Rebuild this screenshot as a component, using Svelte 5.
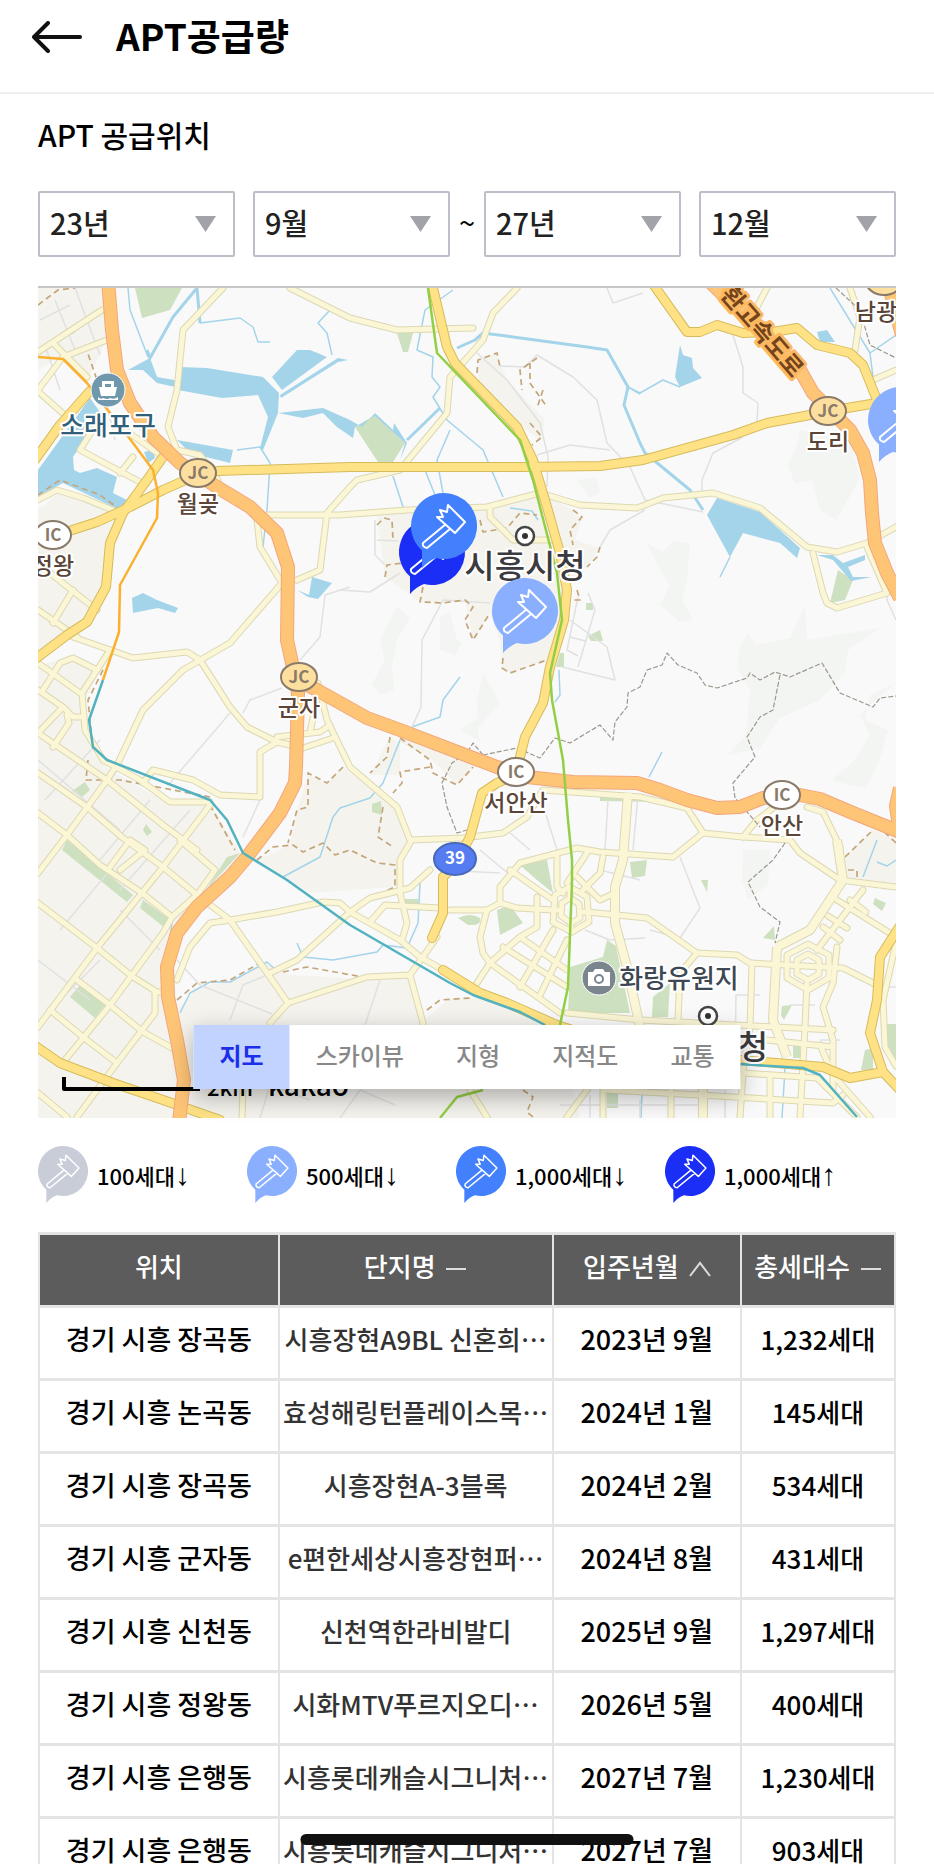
<script>
  let fromYear = $state('23년');
  let fromMonth = $state('9월');
  let toYear = $state('27년');
  let toMonth = $state('12월');
  let mapType = $state('지도');

  const years = ['23년', '24년', '25년', '26년', '27년'];
  const months = Array.from({ length: 12 }, (_, i) => `${i + 1}월`);
  const mapTypes = ['지도', '스카이뷰', '지형', '지적도', '교통'];

  const legend = [
    { level: 'lv1', label: '100세대', arrow: '↓' },
    { level: 'lv2', label: '500세대', arrow: '↓' },
    { level: 'lv3', label: '1,000세대', arrow: '↓' },
    { level: 'lv4', label: '1,000세대', arrow: '↑' },
  ];

  const rows = [
    ['경기 시흥 장곡동', '시흥장현A9BL 신혼희…', '2023년 9월', '1,232세대'],
    ['경기 시흥 논곡동', '효성해링턴플레이스목…', '2024년 1월', '145세대'],
    ['경기 시흥 장곡동', '시흥장현A-3블록', '2024년 2월', '534세대'],
    ['경기 시흥 군자동', 'e편한세상시흥장현퍼…', '2024년 8월', '431세대'],
    ['경기 시흥 신천동', '신천역한라비발디', '2025년 9월', '1,297세대'],
    ['경기 시흥 정왕동', '시화MTV푸르지오디…', '2026년 5월', '400세대'],
    ['경기 시흥 은행동', '시흥롯데캐슬시그니처…', '2027년 7월', '1,230세대'],
    ['경기 시흥 은행동', '시흥롯데캐슬시그니처…', '2027년 7월', '903세대'],
  ];

  // map layers, bottom to top
  const urban = [
    'M38 288H103L106 340 88 380 60 357 38 370Z',
    'M38 510L60 492 120 515 108 560 105 590 87 622 38 655Z',
    'M38 665L73 658 100 668 85 700 90 750 110 770 170 805 210 805 245 860 200 905 172 930 165 990 182 1118H38Z',
    'M180 1118L176 1010 200 986 230 982 265 963 290 975 367 979 410 977 424 1020 450 998 480 998 560 1030 580 1118Z',
    'M377 515L487 510 545 495 572 510 582 520 575 540 600 548 587 567 566 590 560 640 547 660 510 673 502 668 500 640 490 613 473 640 465 600 443 603 420 602 385 577Z',
    'M478 360L497 353 507 380 545 420 540 440 520 425 478 380Z',
    'M343 767L397 810 410 843 395 887 310 893 258 860 290 845 297 810 308 775 327 783Z',
    'M390 737L430 758 457 785 475 767 490 770 400 738 400 775 370 775Z',
    'M845 857L873 830 896 840V886L845 880Z',
  ];

  const forest = [
    'M800 430L850 440 860 478 850 496 836 520 820 510 812 480 795 484 788 465 797 445Z',
    'M740 645L748 634 756 645 790 638 805 606 807 640 880 628 848 650 845 672 820 700 780 718 760 748 728 755 746 735 750 690 737 668Z',
    'M896 683L870 695 865 720 888 730 880 758 866 788 850 785 832 780 855 760 870 735 860 715 875 700Z',
    'M397 607L410 618 397 640 392 665 394 690 380 695 372 684 385 660 380 640 390 620Z',
    'M440 617L450 612 457 640 462 642 455 655 440 650Z',
    'M483 673L500 703 478 728 480 742 460 730 478 718 477 700Z',
    'M647 543L663 552 673 541 690 543 687 580 682 600 693 620 680 622 660 605 670 585 660 570Z',
    'M743 850L770 850 768 885 748 900 742 880Z',
    'M577 480L596 477 600 492 590 498Z',
  ];

  const parks = [
    'M135 288H182L170 310 142 318Z',
    'M397 333H413L408 352H403Z',
    'M355 427L375 415 405 443 393 462H378Z',
    'M838 570L853 580 845 600 830 603Z',
    'M67 840L133 895 127 902 62 850Z',
    'M143 900L168 918 165 928 140 908Z',
    'M80 985L105 1005 95 1018 70 997Z',
    'M227 857L240 853 215 880 203 895Z',
    'M85 782L90 790 82 797 72 791Z',
    'M146 824L152 832 147 836 143 830Z',
    'M607 940L616 946 630 1013H568L570 967 603 957Z',
    'M653 997L670 983 668 1017H652Z',
    'M520 865L547 860 553 893 537 880Z',
    'M497 910L510 905 523 923 500 935Z',
    'M630 862L647 860 645 876 632 878Z',
    'M458 918Q470 912 480 918Q482 926 468 925Z',
    'M600 796L663 798V802L600 801Z',
    'M372 804L381 801 382 815 372 812Z',
    'M763 938L774 926 775 940Z',
    'M875 898L886 903 882 911 873 904Z',
    'M588 636L600 630 603 641 591 641Z',
    'M586 603H593V610H586Z',
    'M560 653H564V667H556Z',
    'M701 880H708L707 892Z',
    'M404 899H418V904H404Z',
    'M865 1050L873 1048 873 1070 861 1070Z',
    'M883 1024H896V1066L885 1047Z',
    'M782 1006L792 1005 784 1020 781 1015Z',
    'M607 1092H618V1108H607Z',
    'M793 1046H800V1058H793Z',
  ];

  const water = [
    'M90 398L100 412 97 420 73 457 74 470 80 473 97 468 117 477 113 493 127 500 120 510 63 483 38 497V470Z',
    'M128 370L150 358 157 377 180 381V388L157 383 143 370Z',
    'M180 367L207 368 263 377 279 393 278 413 263 450 260 448 268 417 258 395 222 398 178 390Z',
    'M272 377L297 350 310 350 327 357 282 390Z',
    'M280 395L338 358 348 360 338 362 281 398Z',
    'M177 440L233 450 230 463 190 453Z',
    'M278 413L323 408 350 420 362 427 375 413 393 430 394 423 407 443 400 460 405 443 375 416 355 427 353 438 337 427 323 413 303 418Z',
    'M132 598L143 593 157 600 178 608 175 613 158 608 133 613Z',
    'M312 577L332 583 318 599 308 597 297 590 309 595Z',
    'M680 345L683 355 692 358 693 368 702 378 680 387 675 377Z',
    'M717 498L760 512 800 548 797 558 780 543 743 533 730 557 707 515Z',
    'M817 332L827 330 835 342 820 342Z',
    'M817 555H833L843 563 865 555V560L848 567 853 577 872 577 851 581 833 560Z',
    'M144 452L153 450 155 458 148 463Z',
  ];

  const streams = [
    'M128 288L130 310 148 357M200 323L240 318 253 327 258 342H270',
    'M330 310L318 323 327 333 332 355',
    'M237 450L260 447 270 463 267 510 263 547',
    'M453 290L425 310 417 350 433 357 432 377 440 387 433 397 447 420 483 450 503 497',
    'M450 430L437 460 443 493M393 476L403 507M425 470L437 500',
    'M628 387L640 393 663 380 680 387M628 387L640 394',
    'M460 677L443 700 440 717 412 727M649 777L662 752M559 670L560 695 555 702',
    'M400 740L383 783 370 798 340 808 333 817 320 857 283 877',
    'M180 1013L190 993 210 982 230 982 267 962 276 970',
    'M297 943L303 957 333 960 377 952 383 945 407 948 418 923 420 883',
    'M830 288L870 353 873 377M870 353L896 335M720 577L730 557',
    'M877 840L863 877M877 862L887 866 896 860M510 508L532 511 538 520',
    'M172 920L167 980M642 1093L641 1118M785 1068L782 1118',
  ];
  const rivers = [
    'M197 288L173 317 150 358 147 350',
    'M457 348L475 340 483 333 513 337 587 347 607 350 628 387 624 405 640 443 645 453 690 490 703 510',
    'M407 440L440 408M197 288L200 323',
  ];

  const lanes = [
    'M537 355L573 377 597 400 607 443 630 467 645 500 703 512',
    'M477 353L507 380 540 423 548 457 547 487M500 366L525 367 537 355',
    'M537 455L570 445 610 450M607 288L613 303 643 293M733 335L743 367V393L758 403 757 423',
    'M743 437L713 453 702 480V493M645 510L610 530 600 547',
    'M443 600L422 640 421 707 412 727M340 590L370 592 400 573M443 600L490 603',
    'M578 597L567 650 578 656M588 593L595 610 578 667M570 620L607 647 615 680 562 667M570 637L585 641',
    'M350 587L325 595 320 637 300 660M282 688L250 700 243 713M230 713L170 783M260 800L243 837',
    'M40 320L70 305M55 300L75 350M75 288L100 355M45 345L60 390M105 395L115 440M60 410L85 430',
    'M38 760L120 830M45 800L100 740M100 860L150 800M120 890L190 810M60 930L110 870M38 960L90 1000M120 910L160 950M60 1000L100 960M140 850L200 895',
    'M177 960L200 985 272 1014M230 1020L243 985 267 975M365 1025L380 980M260 1118L270 1085 310 1100M340 1118L360 1090 395 1105',
    'M600 870L640 880M680 857L700 908 680 938 650 930M440 870L500 873M585 930L610 940 645 938M480 850L510 875',
    'M638 795L633 850M608 800L605 850M546 815L557 850M510 833L530 850M375 520V555L385 565M377 540L398 541',
    'M735 1060L736 995 760 995M880 987H896M790 1005L815 1005M820 1040H840',
    'M560 1105H700M590 1095V1118M640 1100V1118M725 1090V1118M750 1100H800M896 620L887 600 888 575',
  ];

  const minor = [
    'M223 288L183 330 177 390 168 427 177 450 200 455 218 480M290 288L350 318 397 330 473 328',
    'M38 352L102 310M107 340L63 357 38 390M53 343L87 377M40 393L67 417',
    'M140 482L80 450 97 423M133 457L120 473M38 500L57 490 83 498 120 513M125 430L163 457',
    'M267 515H340L407 510 487 507 540 493 580 505 637 508 663 498 713 493 760 508 807 547 837 552 867 543 896 527',
    'M297 580L320 570 327 513 350 487 357 480 400 470 447 413 450 377 483 340 493 313 517 288',
    'M257 520L260 547 282 583 230 643 183 670 143 710 118 763',
    'M73 637L133 658 187 652 200 660 230 707 247 727 277 742 303 748 333 738',
    'M277 742L260 752V797L220 795 193 780 153 770 143 783M277 737L320 732 330 725',
    'M318 683L327 720 350 767 397 807 410 840 463 838 503 833 527 817 543 790 640 797 687 808',
    'M110 650L82 693 85 730 103 760 140 780 170 802H210M317 700L310 732',
    'M50 573L97 610M38 610L77 637M73 590L53 623M38 663L80 693M38 690L63 707 73 717H82M43 690L60 663 73 658 97 670M63 707L38 733M67 715L69 723 53 747',
    'M38 733L107 780 163 825 197 850M38 773L87 807 123 838 163 867 197 895 230 920 263 967 288 1003',
    'M38 813L67 835 100 865 142 893 172 917M38 903L97 948 133 977 157 992M77 980L110 1005 143 1032 172 1048M50 1010L83 1037 117 1063M38 1093L67 1117',
    'M38 873L67 835 107 780 118 763M38 1027L97 948 163 867 210 805M65 1060L110 1005 163 933 172 917 197 895',
    'M77 1117L117 1063 155 1013V992H166M110 867L130 840 145 850 120 870M197 895L215 870 180 840',
    'M230 920L210 923 190 947 177 980M230 920L277 912 323 902 340 903 350 912 400 940 420 957 447 972',
    'M270 973L297 960 350 912 370 898 410 888 430 870M270 1023L288 1003 367 977 410 975 423 1023M410 975L437 937',
    'M410 843L400 860V893L407 923 402 940M370 922L385 905 440 908',
    'M450 910H487L500 903V887L520 863 577 848 600 852 673 857 703 833 743 837 790 840 800 853 840 880 896 887',
    'M687 808L703 833M743 837L757 820 773 808M807 807L823 812 840 847 843 880M500 903L517 908 553 910',
    'M587 912L647 918 697 953 737 955 750 963 843 968 873 983M510 870L553 900M557 857V887L563 893',
    'M587 853L567 883M603 857L600 873 583 890M577 877L600 900 615 893M537 897V927L520 937 490 963 477 983',
    'M487 910L480 937 483 953 490 963 560 1013M503 947L567 987M520 937L567 970M553 930L520 987M567 940L540 995',
    'M567 1013L640 1020 833 1030M697 953L680 973 678 1020M752 963L750 1027 743 1070',
    'M807 983L805 1027 800 1117M817 950L863 890M823 927L840 940M837 900L896 937M837 947L833 983 823 1007 833 1040V1090',
    'M767 1040L833 1047M607 1090L700 1095 833 1103 843 1095M671 1090V1117M603 1090V1117M743 1073L817 1078 857 1117M743 1073L740 1117M770 1075V1117',
    'M587 1090L567 1117M470 1090L487 1117M243 1090L242 1117M850 288L860 317 855 350M873 380L896 370M767 288L757 307',
    'M813 553L823 593 827 603 837 608 887 593 867 547M896 943L883 1000 885 1047 896 1066',
    'M490 507V517L513 540H550M820 1045L833 1075 870 1117M828 916L847 928M850 900L866 912',
    'M555 895L570 887 587 897 589 922 572 932 553 922ZM562 903L570 898 579 904 580 918 571 923 561 916Z',
    'M553 910H561M580 912H589M570 887V898M571 923V932M787 955L808 944 829 955V978L808 990 787 978ZM797 960L808 954 819 960V974L808 980 797 974Z',
  ];
  const wide = [
    'M628 793L623 860 615 887V923L627 967 640 1027',
    'M777 947L773 1020 787 1057M777 947L810 930 843 880 837 840M703 1088V1118',
  ];

  const major = [
    'M217 471L350 467H523L600 466 643 460 690 447 733 435 767 423 810 415 847 408 877 403',
    'M197 475L163 490 130 507 97 522 60 534',
    'M163 457L147 480 123 513 110 543 106 587 87 622 67 635 34 660M90 391L60 425 32 464',
    'M433 288L447 347 455 363 517 427 533 460 547 507 560 553 567 590 564 620 550 667 543 703 525 737 518 765',
    'M515 775L497 783 482 793 470 837 455 865 443 877V913L432 938',
    'M443 970L480 993 507 1003 557 1025 650 1055 740 1060 823 1067 850 1078 883 1072 870 1033 877 1000 880 957 900 926',
    'M883 1072L900 1090M34 1045L60 1063 113 1083 163 1100 220 1120',
    'M653 284L687 332H700L717 325 743 333 773 332 797 328 817 345 850 353 863 365 877 400',
  ];
  const highway = [
    'M108 280L112 330 117 370 130 403 153 437 180 463 217 487 250 507 277 533 288 567 287 640 292 663 298 693 296 767 295 783 280 813 247 857 230 877 197 907 177 933 167 967 168 997 177 1040 184 1080 179 1122',
    'M298 680L317 690 367 718 400 730 447 748 497 767 527 777 573 782 637 783 660 790 687 800 717 808 740 807 763 798 800 795 820 799 853 813 900 832',
    'M708 280L800 370 813 393 830 410 850 430 863 453 870 480 872 513 875 543 887 573 900 598M890 290L902 335M900 788L896 806 899 826',
  ];

  const fineBorders = [
    'M483 755L517 748 540 758 555 738 570 743 600 725 613 740 615 722 627 707 628 693 640 687 647 670 662 665 667 653 678 665 697 673 705 685 717 688 747 678 750 673 760 680 775 672 790 677 822 663 840 693 873 707 880 698 896 696',
    'M780 675L773 710 760 717 747 737 755 757 733 783 735 798 760 827M785 843L773 860 748 882 760 907 780 922 775 943',
    'M483 755L473 743 467 753 452 763 442 783 447 807 457 833 467 830M836 288L860 310 870 345 896 358',
  ];
  const cityBorders = [
    'M390 737L387 757 370 773M400 738L430 760 433 773 457 785 473 767M430 767L400 772 402 783 393 793M383 807L378 837 393 847',
    'M343 767L327 783 308 773V807L297 810 288 843M257 860L273 847 293 845 303 852 323 843 335 855 350 850 377 863 395 865V887L383 892',
    'M177 1000L197 983 230 980 260 963M283 972L307 967 363 977M477 373L478 360 497 353 500 367M537 358L520 370 522 390M530 363V383L547 407M543 390L537 408',
    'M530 423L542 437 532 445M377 525L384 518 392 520 393 540M480 520L483 532 507 528 520 513 537 515M573 510L582 517 570 530 573 545M600 547L597 557 587 567',
    'M423 587L420 602 443 603 465 600 473 607 465 620 473 640 490 613M503 658L502 668 510 673 547 660M385 577L387 565 403 563M577 590L580 600 570 600',
    'M38 305L58 290 75 288M98 310L70 335M85 345L97 380M103 670L88 700 92 740M88 760L86 780H120L210 797M210 805L235 850M845 857L873 830M896 843L880 828M848 870H857V878',
    'M523 1090L533 1097 527 1112 533 1117M38 495L60 480 100 495 118 508M427 1010L440 1000 470 998',
  ];

  const pins = [
    { level: 'lv4', x: 399, y: 519 },
    { level: 'lv3', x: 411, y: 493 },
    { level: 'lv2', x: 492, y: 578 },
    { level: 'lv2', x: 868, y: 387 },
  ];
  const junctions = [
    { x: 198, y: 473, code: 'JC', name: '월곶' },
    { x: 299, y: 677, code: 'JC', name: '군자' },
    { x: 828, y: 411, code: 'JC', name: '도리' },
    { x: 884, y: 281, code: 'JC', name: '남광' },
    { x: 53, y: 535, code: 'IC', name: '정왕' },
    { x: 516, y: 772, code: 'IC', name: '서안산' },
    { x: 782, y: 795, code: 'IC', name: '안산' },
  ];
</script>

{#snippet pinShape()}
  <path class="pin-body" d="M33 0A33 33 0 1 1 25 65Q17 68 11 75V57.6A33 33 0 0 1 33 0Z" />
  <path class="pin-mark" d="M26 24L32 24 29 17 36 19 37 12 54 29 44 40ZM35 31L12 50Q11 54 16 55L39 36" />
{/snippet}

{#snippet picker(label, options, value, onchange)}
  <div class="picker">
    <select aria-label={label} {value} onchange={(e) => onchange(e.currentTarget.value)}>
      {#each options as option}
        <option value={option}>{option}</option>
      {/each}
    </select>
  </div>
{/snippet}

<div class="page">
  <header>
    <button class="back" aria-label="뒤로">
      <svg viewBox="0 0 50 32" width="50" height="32">
        <path d="M16 2L2 16 16 30M2 16H48" />
      </svg>
    </button>
    <h1>APT공급량</h1>
  </header>

  <main>
    <h2>APT 공급위치</h2>

    <div class="range">
      {@render picker('시작 년도', years, fromYear, (v) => (fromYear = v))}
      {@render picker('시작 월', months, fromMonth, (v) => (fromMonth = v))}
      <span class="tilde">~</span>
      {@render picker('종료 년도', years, toYear, (v) => (toYear = v))}
      {@render picker('종료 월', months, toMonth, (v) => (toMonth = v))}
    </div>

    <div class="map">
      <svg class="map-canvas" viewBox="38 288 858 830">
        {#each urban as d}<path class="urban" {d} />{/each}
        {#each forest as d}<path class="forest" {d} />{/each}
        {#each parks as d}<path class="park" {d} />{/each}
        {#each water as d}<path class="water" {d} />{/each}
        {#each streams as d}<path class="stream" {d} />{/each}
        {#each rivers as d}<path class="river" {d} />{/each}
        {#each lanes as d}<path class="lane" {d} />{/each}
        {#each cityBorders as d}<path class="city-border" {d} />{/each}
        {#each minor as d}<path class="minor-case" {d} />{/each}
        {#each wide as d}<path class="wide-case" {d} />{/each}
        {#each minor as d}<path class="minor" {d} />{/each}
        {#each wide as d}<path class="wide" {d} />{/each}
        {#each fineBorders as d}<path class="fine-border" {d} />{/each}
        {#each major as d}<path class="major-case" {d} />{/each}
        {#each major as d}<path class="major" {d} />{/each}
        {#each highway as d}<path class="highway-case" {d} />{/each}
        {#each highway as d}<path class="highway" {d} />{/each}

        <path class="rail orange" d="M38 357L63 359 87 383 110 413 133 443 153 470 158 493 157 518 120 585 119 632 103 680" />
        <path class="rail teal" d="M103 680L89 720 93 747 107 760 210 800 227 820 243 853 287 880 350 925 450 983 473 995 520 1012 545 1025M740 1064L803 1068 820 1075 857 1117" />
        <path class="rail green" d="M428 288L437 353 520 440 533 480 557 573 562 620 550 673 552 700 563 760 568 820 572 860V883L568 987 560 1025M440 1118L457 1097 483 1090" />

        <text class="road-name" transform="translate(762 332) rotate(49)" y="8">환고속도로</text>

        {#each junctions as j}
          <g transform="translate({j.x} {j.y})">
            <ellipse class={['junction', j.code === 'JC' && 'jc']} rx="18" ry="14" />
            <text class="junction-code" y="6">{j.code}</text>
            <text class="junction-name" x={j.name === '남광' ? -8 : 0} y="39">{j.name}</text>
          </g>
        {/each}

        <g transform="translate(108 390)">
          <circle class="harbor" r="17" />
          <path class="icon-fill" d="M-6 -9H6V-3H9L7 6H-7L-9 -3H-6ZM-3 -6V-3H3V-6ZM-10 7Q-7 10 -5 8 0 10 2 8 6 10 10 7V10H-10Z" fill-rule="evenodd" />
          <text class="place harbor-name" y="45">소래포구</text>
        </g>

        <g transform="translate(599 978)">
          <circle class="photo" r="17" />
          <path class="icon-fill" d="M-11 -6H-6L-4 -9H4L6 -6H11V8H-11Z" />
          <circle class="lens" cy="1" r="4" />
          <text class="place park-name" x="80" y="10">화랑유원지</text>
        </g>

        <text class="city" x="753" y="1059">청</text>
        <circle class="city-ring" cx="708" cy="1016" r="9" />
        <circle class="city-dot" cx="708" cy="1016" r="3" />
        <circle class="city-ring" cx="525" cy="536" r="9" />
        <circle class="city-dot" cx="525" cy="536" r="3" />
        <text class="city" x="525" y="578">시흥시청</text>

        <ellipse class="route" cx="455" cy="859" rx="21" ry="16" />
        <text class="route-no" x="455" y="864">39</text>

        {#each pins as pin}
          <g class={pin.level} transform="translate({pin.x} {pin.y})">
            {@render pinShape()}
          </g>
        {/each}

        <path class="scale" d="M64 1077V1089H200" />
        <text class="scale-text" x="207" y="1096">2km</text>
        <text class="kakao" x="268" y="1096">kakao</text>
      </svg>

      <div class="map-types">
        {#each mapTypes as type}
          <button class={{ active: mapType === type }} onclick={() => (mapType = type)}>{type}</button>
        {/each}
      </div>
    </div>

    <ul class="legend">
      {#each legend as item}
        <li>
          <svg class={item.level} viewBox="0 0 66 75" width="50" height="57">
            {@render pinShape()}
          </svg>
          <span>{item.label}</span><span class="arrow">{item.arrow}</span>
        </li>
      {/each}
    </ul>

    <table>
      <thead>
        <tr>
          <th class="col-place">위치</th>
          <th class="col-name">
            <button>단지명 <svg width="22" height="20" viewBox="0 0 22 20"><path d="M1 10H21" /></svg></button>
          </th>
          <th class="col-date">
            <button>입주년월 <svg width="22" height="20" viewBox="0 0 22 20"><path d="M1 17L11 4 21 17" /></svg></button>
          </th>
          <th class="col-count">
            <button>총세대수 <svg width="22" height="20" viewBox="0 0 22 20"><path d="M1 10H21" /></svg></button>
          </th>
        </tr>
      </thead>
      <tbody>
        {#each rows as [place, name, date, count]}
          <tr>
            <td class="large">{place}</td>
            <td class="name">{name}</td>
            <td class="large">{date}</td>
            <td>{count}</td>
          </tr>
        {/each}
      </tbody>
    </table>
  </main>

  <div class="home-bar"></div>
</div>

<style>
  :global(body) {
    margin: 0;
    background: #fff;
  }

  .page {
    position: relative;
    display: flex;
    flex-direction: column;
    height: 100vh;
    overflow: hidden;
    color: #000;
    font-family: "Noto Sans CJK KR", "Noto Sans", sans-serif;
  }

  button,
  select {
    font-family: inherit;
    cursor: pointer;
  }

  header {
    display: flex;
    flex: none;
    align-items: center;
    gap: 34px;
    box-sizing: border-box;
    height: 94px;
    padding: 0 32px 18px;
    border-bottom: 2px solid #eee;
  }

  .back {
    display: flex;
    padding: 0;
    border: none;
    background: none;
  }

  .back path {
    fill: none;
    stroke: #111;
    stroke-width: 4;
    stroke-linecap: round;
    stroke-linejoin: round;
  }

  h1 {
    margin: 0;
    padding-bottom: 5px;
    font-size: 37px;
    line-height: 48px;
  }

  main {
    flex: 1;
    min-height: 0;
    padding: 0 38px;
    overflow-y: auto;
    scrollbar-width: none;
  }

  h2 {
    margin: 20px 0 37px;
    font-size: 30px;
    line-height: 40px;
    font-weight: 500;
  }

  .range {
    display: flex;
    align-items: center;
    margin-bottom: 29px;
  }

  .picker {
    position: relative;
    flex: 1;
  }

  .picker + .picker {
    margin-left: 18px;
  }

  .picker::after {
    content: "";
    position: absolute;
    top: 25px;
    right: 19px;
    width: 21px;
    height: 16px;
    background: #a2a3a8;
    clip-path: polygon(0 0, 100% 0, 50% 100%);
    pointer-events: none;
  }

  select {
    display: block;
    width: 100%;
    height: 66px;
    padding: 0 10px 5px;
    border: 2px solid #bcbec8;
    border-radius: 2px;
    background: #fff;
    color: #222;
    font-size: 29px;
    font-weight: 500;
    appearance: none;
  }

  .tilde {
    width: 34px;
    padding-bottom: 6px;
    text-align: center;
    font-size: 29px;
  }

  .map {
    position: relative;
    border-top: 2px solid #c4c6c7;
  }

  .map-canvas {
    display: block;
    width: 100%;
    background: #f9f9f9;
  }

  .map-canvas path {
    fill: none;
    stroke-linejoin: round;
  }

  .map-canvas .urban { fill: #f4f3ee; }
  .map-canvas .forest { fill: #f3f5f2; }
  .map-canvas .park { fill: #cde0c0; }
  .map-canvas .water { fill: #a4d4ea; }
  .stream { stroke: #a4d4ea; stroke-width: 1.5; }
  .river { stroke: #a4d4ea; stroke-width: 3; }
  .lane { stroke: #e1e1e1; stroke-width: 1.5; }
  .fine-border { stroke: #9c978e; stroke-width: 1.2; stroke-dasharray: 5 2; }
  .city-border { stroke: #c4a67a; stroke-width: 1.7; stroke-dasharray: 6 4; }
  .minor-case { stroke: #dcd8b4; stroke-width: 7; stroke-linecap: round; }
  .minor { stroke: #faf6d6; stroke-width: 5; stroke-linecap: round; }
  .wide-case { stroke: #dcd8b4; stroke-width: 10; }
  .wide { stroke: #faf6d6; stroke-width: 8; }
  .major-case { stroke: #d6bb5c; stroke-width: 10; stroke-linecap: round; }
  .major { stroke: #fee285; stroke-width: 8; stroke-linecap: round; }
  .highway-case { stroke: #f3a67c; stroke-width: 14; }
  .highway { stroke: #fec577; stroke-width: 12; }
  .rail { stroke-width: 2.5; }
  .orange { stroke: #fbb12f; }
  .teal { stroke: #52b2c0; }
  .green { stroke: #93cf45; }

  .map-canvas text {
    font-weight: 500;
    paint-order: stroke;
    stroke: #fff;
    stroke-width: 4;
    stroke-linejoin: round;
    text-anchor: middle;
  }

  .map-canvas .road-name {
    fill: #74441b;
    stroke: #fdb962;
    stroke-width: 6;
    font-size: 24px;
    font-weight: 700;
  }

  .junction {
    fill: #fff;
    stroke: #8a7a69;
    stroke-width: 2;
  }

  .jc {
    fill: #fde0a0;
  }

  .map-canvas .junction-code {
    fill: #8a7a69;
    stroke: none;
    font-size: 17px;
    font-weight: 700;
  }

  .junction-name {
    fill: #5b4539;
    font-size: 23px;
  }

  .harbor {
    fill: #6f98ad;
    stroke: #fff;
  }

  .photo {
    fill: #7b858e;
    stroke: #fff;
  }

  .map-canvas .icon-fill {
    fill: #fff;
  }

  .lens {
    fill: #fff;
    stroke: #7b858e;
    stroke-width: 2;
  }

  .place {
    font-size: 26px;
  }

  .harbor-name {
    fill: #315f79;
  }

  .park-name {
    fill: #3d4852;
  }

  .city {
    fill: #3b3b3f;
    font-size: 33px;
  }

  .city-ring {
    fill: #fff;
    stroke: #444;
    stroke-width: 2.5;
  }

  .city-dot {
    fill: #333;
  }

  .route {
    fill: #557cf0;
    stroke: #4868b8;
    stroke-width: 2;
  }

  .map-canvas .route-no {
    fill: #fff;
    stroke: none;
    font-size: 17px;
    font-weight: 700;
  }

  .scale {
    stroke: #000;
    stroke-width: 4;
  }

  .map-canvas .scale-text,
  .map-canvas .kakao {
    stroke: none;
    text-anchor: start;
    font-size: 22px;
  }

  .map-canvas .kakao {
    font-size: 28px;
  }

  .lv1 { --pin: #c9cdd8; }
  .lv2 { --pin: #8aafff; }
  .lv3 { --pin: #4380fe; }
  .lv4 { --pin: #1b2ef5; }

  .map-canvas .pin-body,
  .pin-body {
    fill: var(--pin);
  }

  .pin-mark {
    fill: none;
    stroke: #fff;
    stroke-width: 2;
    stroke-linejoin: round;
  }

  .map-types {
    position: absolute;
    bottom: 29px;
    left: 50%;
    display: flex;
    transform: translateX(-50%);
    background: #fff;
    box-shadow: 0 8px 24px rgba(0, 0, 0, 0.3);
  }

  .map-types button {
    height: 64px;
    padding: 0 26px 6px;
    border: none;
    background: none;
    color: #888;
    font-size: 24px;
    font-weight: 500;
    white-space: nowrap;
  }

  .map-types .active {
    background: #c3d3ff;
    color: #1b2ee8;
    font-weight: 700;
  }

  .legend {
    display: grid;
    grid-template-columns: repeat(4, 209px);
    margin: 28px 0 29px;
    padding: 0;
    list-style: none;
  }

  .legend li {
    display: flex;
    align-items: center;
    font-size: 22px;
    font-weight: 500;
    line-height: 32px;
  }

  .legend svg {
    flex: none;
    margin-right: 9px;
  }

  .arrow {
    font-family: "Liberation Sans", sans-serif;
    font-size: 30px;
    font-weight: 400;
  }

  table {
    width: 100%;
    table-layout: fixed;
    border-collapse: collapse;
    text-align: center;
    font-size: 26px;
    line-height: 38px;
  }

  th,
  td {
    box-sizing: border-box;
    height: 73px;
    padding: 0 0 9px;
    border: 2px solid #e4e4e4;
    border-width: 3px 2px;
    font-weight: 500;
    white-space: nowrap;
  }

  th {
    background: #5c5c5c;
    color: #fff;
  }

  th button {
    padding: 0;
    border: none;
    background: none;
    color: inherit;
    font-size: inherit;
    font-weight: inherit;
    line-height: inherit;
  }

  th svg {
    margin-left: 4px;
    vertical-align: -2px;
  }

  th path {
    fill: none;
    stroke: #ddd;
    stroke-width: 2;
  }

  .col-place { width: 28%; }
  .col-name { width: 32%; }
  .col-date { width: 22%; }
  .col-count { width: 18%; }

  .large {
    font-size: 27px;
  }

  .name {
    color: #333;
  }

  .home-bar {
    position: absolute;
    bottom: 19px;
    left: 50%;
    width: 333px;
    height: 11px;
    transform: translateX(-50%);
    border-radius: 6px;
    background: #111;
  }
</style>
